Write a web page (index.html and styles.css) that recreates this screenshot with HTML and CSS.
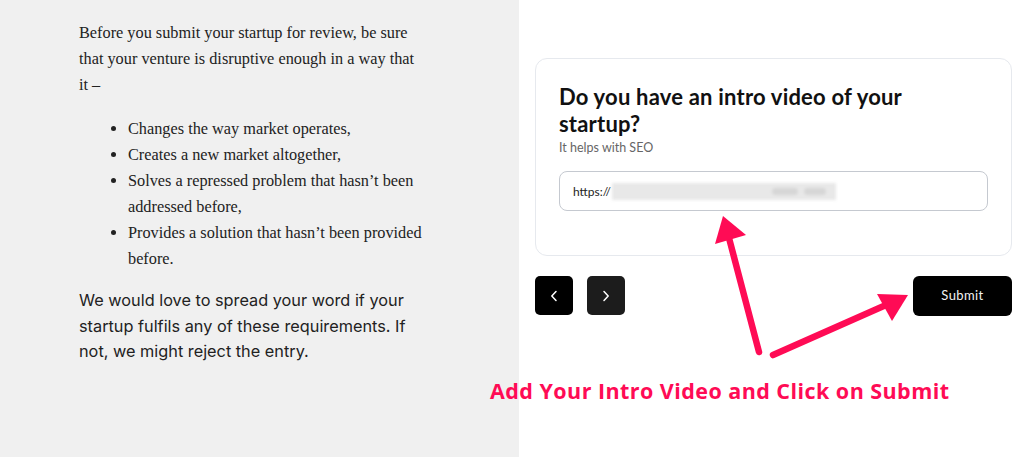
FILE: index.html
```html
<!DOCTYPE html>
<html lang="en">
<head>
<meta charset="utf-8">
<title>Submit startup</title>
<link rel="stylesheet" href="styles.css">
</head>
<body>
<div class="page">
  <section class="info">
    <p class="serif">Before you submit your startup for review, be sure that your venture is disruptive enough in a way that it –</p>
    <ul class="serif list">
      <li>Changes the way market operates,</li>
      <li>Creates a new market altogether,</li>
      <li>Solves a repressed problem that hasn’t been addressed before,</li>
      <li>Provides a solution that hasn’t been provided before.</li>
    </ul>
    <p class="sans">We would love to spread your word if your startup fulfils any of these requirements. If not, we might reject the entry.</p>
  </section>
  <section class="form-side">
    <div class="card">
      <h2 class="q">Do you have an intro video of your startup?</h2>
      <div class="hint">It helps with SEO</div>
      <div class="input">
        <span class="proto">https://</span><span class="blur"><span class="blob b1"></span><span class="blob b2"></span></span>
      </div>
    </div>
    <div class="actions">
      <div class="navs">
        <button class="nav prev" aria-label="Previous"><svg width="12" height="14" viewBox="0 0 12 14"><path d="M8 2.5 L3.8 7 L8 11.5" fill="none" stroke="#fff" stroke-width="1.5" stroke-linecap="round" stroke-linejoin="round"/></svg></button>
        <button class="nav next" aria-label="Next"><svg width="12" height="14" viewBox="0 0 12 14"><path d="M4 2.5 L8.2 7 L4 11.5" fill="none" stroke="#fff" stroke-width="1.5" stroke-linecap="round" stroke-linejoin="round"/></svg></button>
      </div>
      <button class="submit">Submit</button>
    </div>
  </section>
  <svg class="arrows" width="1024" height="457" viewBox="0 0 1024 457">
    <g stroke="#ff0b55" stroke-width="6.5" stroke-linecap="round" fill="none">
      <line x1="759" y1="352" x2="729" y2="238"/>
      <line x1="773" y1="355" x2="886" y2="305"/>
    </g>
    <g fill="#ff0b55">
      <polygon points="723,216 715,244 746,235"/>
      <polygon points="908,295 877,294 892,321"/>
    </g>
  </svg>
  <div class="note">Add Your Intro Video and Click on Submit</div>
</div>
</body>
</html>
```

FILE: styles.css
```css
html, body {
  margin: 0;
  padding: 0;
}
body {
  width: 1024px;
  height: 457px;
  overflow: hidden;
  background: #fff;
}
.page {
  position: relative;
  display: flex;
  width: 1024px;
  height: 457px;
}
.info {
  width: 519px;
  flex: none;
  background: #f0f0f0;
  box-sizing: border-box;
  padding: 20px 95px 0 79px;
  color: #222;
}
.serif {
  font-family: "Liberation Serif", "Times New Roman", serif;
  font-size: 16.3px;
  line-height: 26px;
}
.info p.serif {
  margin: 0 0 18px;
}
.list {
  margin: 0 0 16px;
  padding-left: 49px;
}
.sans {
  font-family: Inter, "Noto Sans", sans-serif;
  font-size: 16.3px;
  line-height: 25.6px;
  margin: 0;
  color: #222;
  max-width: 335px;
}
.form-side {
  flex: 1;
  box-sizing: border-box;
  padding: 58px 12px 0 16px;
}
.card {
  border: 1px solid #e6e9ee;
  border-radius: 12px;
  padding: 24px 23px 44px 23px;
  background: #fff;
}
.q {
  margin: 0;
  font-family: Lato, "Noto Sans", sans-serif;
  font-weight: 700;
  font-size: 22px;
  line-height: 27px;
  color: #111;
  letter-spacing: 0.2px;
  max-width: 380px;
}
.hint {
  margin-top: 3px;
  font-family: Lato, "Noto Sans", sans-serif;
  font-size: 12.5px;
  line-height: 16px;
  color: #666;
}
.input {
  margin-top: 15px;
  height: 40px;
  box-sizing: border-box;
  border: 1px solid #c5c9d0;
  border-radius: 8px;
  display: flex;
  align-items: center;
  padding-left: 13px;
}
.proto {
  font-family: Lato, "Noto Sans", sans-serif;
  font-size: 12px;
  color: #222;
}
.blur {
  position: relative;
  display: inline-block;
  width: 224px;
  height: 17px;
  background: #e8e8e8;
  filter: blur(1.5px);
  margin-left: 1px;
}
.blob {
  position: absolute;
  top: 5px;
  height: 7px;
  border-radius: 4px;
  background: #d6d6d6;
}
.b1 { left: 160px; width: 26px; }
.b2 { left: 192px; width: 22px; }
.actions {
  margin-top: 20px;
  display: flex;
  justify-content: space-between;
  align-items: flex-start;
}
.navs {
  display: flex;
  gap: 14px;
}
.nav {
  width: 38px;
  height: 39px;
  border: none;
  border-radius: 5px;
  display: flex;
  align-items: center;
  justify-content: center;
  padding: 0;
}
.prev { background: #000; }
.next { background: #1c1c1c; }
.submit {
  width: 99px;
  height: 40px;
  border: none;
  border-radius: 6px;
  background: #000;
  color: #f2f2f2;
  font-family: Lato, "Noto Sans", sans-serif;
  font-size: 13px;
  letter-spacing: 0.4px;
  padding: 0 0 2px;
}
.arrows {
  position: absolute;
  left: 0;
  top: 0;
  pointer-events: none;
}
.note {
  position: absolute;
  left: 490px;
  top: 376px;
  font-family: "Open Sans", sans-serif;
  font-weight: 700;
  font-size: 21.5px;
  line-height: 30px;
  letter-spacing: 0.45px;
  color: #ff0b55;
  white-space: nowrap;
}
```
